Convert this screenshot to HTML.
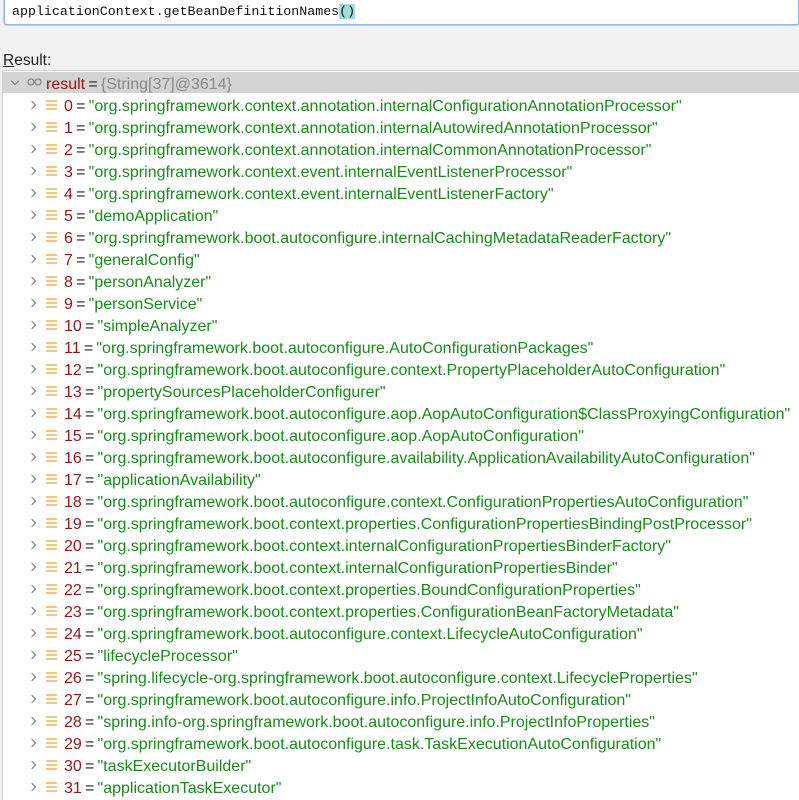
<!DOCTYPE html>
<html><head><style>
body{margin:0;width:799px;height:799px;overflow:hidden;background:#f2f2f2;font-family:"Liberation Sans","DejaVu Sans",sans-serif;position:relative}
.inp{position:absolute;left:4px;top:0;width:793px;height:24px;background:#fff;border:1px solid #8fb6e6;border-top:none;border-radius:0 0 3px 3px;box-shadow:0 0 0 1px #b9d2f0}
.inp span{position:absolute;left:7px;top:4px;font-family:"Liberation Mono",monospace;font-size:13.3px;color:#111}
.inp b{font-weight:normal;background:#9fdcdc}
.lbl{position:absolute;left:3px;top:52px;font-size:15.5px;color:#222}
.tree{position:absolute;left:2px;top:70px;width:797px;height:729px;background:#fff;border-top:1px solid #d0d0d0;border-left:1px solid #d0d0d0}
.res{position:absolute;left:0;top:1px;width:797px;height:21px;background:#d4d4d4}
.row{position:absolute;height:22px;line-height:22px;font-size:16px;white-space:nowrap}
.n{color:#9a1414}.e{color:#222}.s{color:#1a8a1a}.g{color:#888}
.arr{position:absolute;width:5px;height:5px;border-right:1.5px solid #777;border-bottom:1.5px solid #777}
.ic{position:absolute;left:46px;width:11px;height:10px;background:repeating-linear-gradient(#f5c77e 0 2px,transparent 2px 4px)}
</style></head><body>
<div class="inp"><span>applicationContext.getBeanDefinitionNames<b>()</b></span></div>
<div class="lbl"><u>R</u>esult:</div>
<div class="tree"><div class="res"></div></div>
<div class="arr" style="left:12px;top:78px;transform:rotate(45deg)"></div>
<svg style="position:absolute;left:27px;top:78px" width="16" height="8"><circle cx="4" cy="4" r="3" fill="none" stroke="#888" stroke-width="1.3"/><circle cx="11" cy="4" r="3" fill="none" stroke="#888" stroke-width="1.3"/></svg>
<div class="row" style="left:46px;top:74px"><span class="n">result</span><span class="e">&#8201;=&#8201;</span><span class="g">{String[37]@3614}</span></div>
<div id="rows"></div>
<script>
var d=["org.springframework.context.annotation.internalConfigurationAnnotationProcessor","org.springframework.context.annotation.internalAutowiredAnnotationProcessor","org.springframework.context.annotation.internalCommonAnnotationProcessor","org.springframework.context.event.internalEventListenerProcessor","org.springframework.context.event.internalEventListenerFactory","demoApplication","org.springframework.boot.autoconfigure.internalCachingMetadataReaderFactory","generalConfig","personAnalyzer","personService","simpleAnalyzer","org.springframework.boot.autoconfigure.AutoConfigurationPackages","org.springframework.boot.autoconfigure.context.PropertyPlaceholderAutoConfiguration","propertySourcesPlaceholderConfigurer","org.springframework.boot.autoconfigure.aop.AopAutoConfiguration$ClassProxyingConfiguration","org.springframework.boot.autoconfigure.aop.AopAutoConfiguration","org.springframework.boot.autoconfigure.availability.ApplicationAvailabilityAutoConfiguration","applicationAvailability","org.springframework.boot.autoconfigure.context.ConfigurationPropertiesAutoConfiguration","org.springframework.boot.context.properties.ConfigurationPropertiesBindingPostProcessor","org.springframework.boot.context.internalConfigurationPropertiesBinderFactory","org.springframework.boot.context.internalConfigurationPropertiesBinder","org.springframework.boot.context.properties.BoundConfigurationProperties","org.springframework.boot.context.properties.ConfigurationBeanFactoryMetadata","org.springframework.boot.autoconfigure.context.LifecycleAutoConfiguration","lifecycleProcessor","spring.lifecycle-org.springframework.boot.autoconfigure.context.LifecycleProperties","org.springframework.boot.autoconfigure.info.ProjectInfoAutoConfiguration","spring.info-org.springframework.boot.autoconfigure.info.ProjectInfoProperties","org.springframework.boot.autoconfigure.task.TaskExecutionAutoConfiguration","taskExecutorBuilder","applicationTaskExecutor"];
var h="";
for(var i=0;i<d.length;i++){var y=94+22*i;
h+='<div class="arr" style="left:29px;top:'+(y+8)+'px;transform:rotate(-45deg)"></div><div class="ic" style="top:'+(y+6)+'px"></div><div class="row" style="left:64px;top:'+(y+2)+'px"><span class="n">'+i+'</span><span class="e">&#8201;=&#8201;</span><span class="s">"'+d[i]+'"</span></div>';}
document.getElementById("rows").innerHTML=h;
</script>
</body></html>
